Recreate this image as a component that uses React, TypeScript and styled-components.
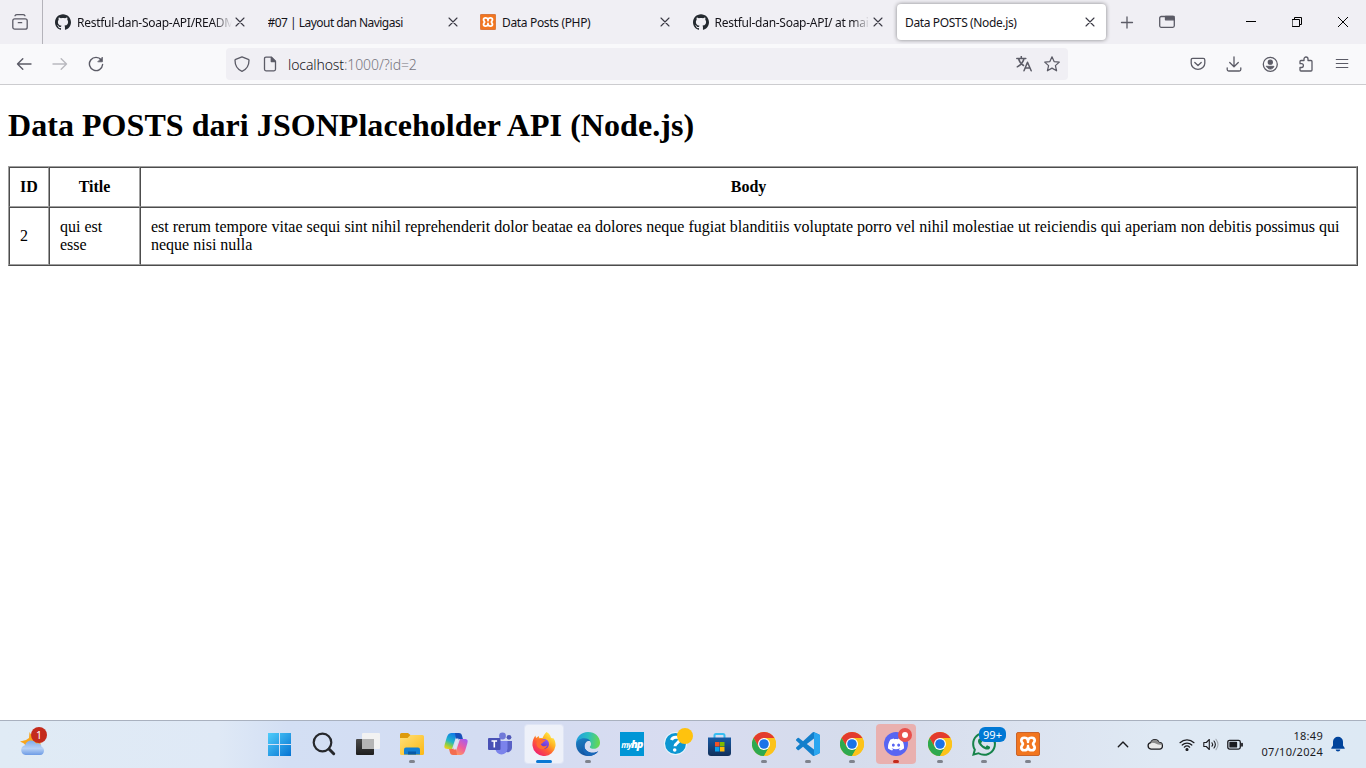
import React from "react";
import styled, { createGlobalStyle } from "styled-components";
import { SiGithub, SiDiscord, SiWhatsapp } from "react-icons/si";

const GlobalStyle = createGlobalStyle`
  * { box-sizing: border-box; }
  html, body { margin: 0; padding: 0; overflow: hidden; }
  svg { display: block; flex: none; }
`;

const uiFont = `"Noto Sans", "Open Sans", sans-serif`;

const Screen = styled.div`
  width: 1366px;
  height: 768px;
  display: flex;
  flex-direction: column;
  background: #fff;
  overflow: hidden;
  font-family: ${uiFont};
`;

/* ---------- tab strip ---------- */

const TabStrip = styled.header`
  height: 44px;
  flex: none;
  display: flex;
  align-items: center;
  background: #f0eff4;
`;

const RecentButton = styled.div`
  width: 43px;
  height: 44px;
  display: flex;
  align-items: center;
  padding-left: 12px;
  border-right: 1px solid #b4b3ba;
  color: #5b5b66;
`;

const TabList = styled.div`
  display: flex;
  gap: 3.5px;
  padding-left: 4px;
`;

const Tab = styled.div<{ $active?: boolean }>`
  width: 209px;
  height: 36px;
  display: flex;
  align-items: center;
  padding: 0 8px;
  border-radius: 4px;
  background: ${(p) => (p.$active ? "#fff" : "transparent")};
  box-shadow: ${(p) => (p.$active ? "0 0 4px rgba(0, 0, 0, 0.45)" : "none")};
`;

const Favicon = styled.span`
  width: 16px;
  height: 16px;
  margin-right: 6px;
  flex: none;
  color: #24292f;
`;

const TabLabel = styled.span<{ $fade?: boolean; $tracking?: number }>`
  flex: 1;
  min-width: 0;
  overflow: hidden;
  white-space: nowrap;
  padding-top: 2px;
  font-size: 12px;
  line-height: 18px;
  letter-spacing: ${(p) => p.$tracking ?? -0.35}px;
  color: #15141a;
  ${(p) => p.$fade && "mask-image: linear-gradient(to left, transparent 0, #000 18px);"}
`;

const CloseSlot = styled.span`
  width: 16px;
  height: 16px;
  flex: none;
  color: #3a3944;
`;

const StripButtons = styled.div`
  flex: 1;
  display: flex;
  align-items: center;
  justify-content: space-between;
  padding-left: 13px;
  color: #5b5b66;
`;

const NewTabGroup = styled.div`
  display: flex;
  align-items: center;
  gap: 24px;
`;

const WindowControls = styled.div`
  display: flex;
`;

const WindowControl = styled.div`
  width: 46px;
  height: 44px;
  display: flex;
  align-items: center;
  justify-content: center;
  color: #000;
`;

/* ---------- navigation bar ---------- */

const NavBar = styled.nav`
  height: 41px;
  flex: none;
  display: flex;
  align-items: center;
  background: #f9f9fb;
  border-bottom: 1px solid #cccccf;
  color: #5b5b66;
`;

const NavButtons = styled.div`
  width: 226px;
  display: flex;
  gap: 20px;
  padding-left: 16px;
`;

const Dimmed = styled.span`
  opacity: 0.4;
`;

const AddressBar = styled.div`
  width: 842px;
  height: 32px;
  display: flex;
  align-items: center;
  padding: 0 8px;
  border-radius: 4px;
  background: #f0eff4;
`;

const PageInfo = styled.div`
  display: flex;
  gap: 12px;
`;

const Address = styled.div`
  flex: 1;
  padding: 2px 0 0 10px;
  font-size: 14px;
  line-height: 20px;
  font-weight: 300;
  letter-spacing: -0.1px;
  color: #77767e;
`;

const Host = styled.span`
  color: #15141a;
`;

const AddressActions = styled.div`
  display: flex;
  gap: 12px;
`;

const ToolbarActions = styled.div`
  flex: 1;
  display: flex;
  justify-content: flex-end;
  gap: 20px;
  padding-right: 16px;
`;

/* ---------- document ---------- */

const Page = styled.main`
  flex: 1;
  padding: 22px 8px 0;
  font-family: "Liberation Serif", "Times New Roman", serif;
  color: #000;
`;

const Heading = styled.h1`
  margin: 0 0 22px;
  font-size: 32px;
  line-height: 37px;
  font-weight: bold;
  letter-spacing: 0.05px;
`;

const PostTable = styled.table`
  width: 1350px;
  table-layout: fixed;
  border-spacing: 0;
  border-style: solid;
  border-width: 1px;
  border-color: #a0a0a0 #4c4c4c #4c4c4c #a0a0a0;
  font-size: 16px;
  line-height: 18px;
  letter-spacing: 0.004px;

  th,
  td {
    padding: 10px;
    border-style: solid;
    border-width: 1px;
    border-color: #4c4c4c #a0a0a0 #a0a0a0 #4c4c4c;
  }
`;

const Column = styled.col<{ $w?: number }>`
  width: ${(p) => (p.$w ? `${p.$w}px` : "auto")};
`;

/* ---------- taskbar ---------- */

const Taskbar = styled.footer`
  height: 48px;
  flex: none;
  display: flex;
  border-top: 1px solid #a9b1bf;
  background: linear-gradient(
    90deg,
    #e0ebf5 0,
    #dfe9f6 16%,
    #d3dff4 21%,
    #d3dcf2 35%,
    #d8dcf0 50%,
    #d5dcec 62%,
    #dce3f0 75%,
    #dfe9f4 85%,
    #dde9f4 100%
  );
`;

const Weather = styled.div`
  position: relative;
  width: 258px;
  padding: 11px 0 0 20px;
`;

const CountBadge = styled.span`
  position: absolute;
  left: 31px;
  top: 6px;
  width: 16px;
  height: 16px;
  border-radius: 8px;
  background: #c42b1c;
  color: #fff;
  font-size: 10.5px;
  line-height: 16px;
  text-align: center;
`;

const Slot = styled.div`
  width: 44px;
  padding: 3px 2px 0;
`;

const AppTile = styled.div<{ $tone?: "active" | "alert" }>`
  position: relative;
  width: 40px;
  height: 40px;
  display: flex;
  align-items: center;
  justify-content: center;
  border-radius: 4px;
  background: ${(p) =>
    p.$tone === "active" ? "rgba(255,255,255,.6)" : p.$tone === "alert" ? "#e9b0af" : "transparent"};
  background-clip: padding-box;
  border: ${(p) => (p.$tone === "active" ? "1px solid rgba(255,255,255,.25)" : "none")};
`;

const RunMark = styled.span<{ $kind: "dot" | "active" | "alert" }>`
  position: absolute;
  bottom: ${(p) => (p.$kind === "active" ? 0 : 1)}px;
  left: ${(p) => (p.$kind === "active" ? 11 : 17)}px;
  width: ${(p) => (p.$kind === "active" ? 16 : 6)}px;
  height: 3px;
  border-radius: 2px;
  background: ${(p) => ({ dot: "#7f838d", active: "#0a78d4", alert: "#c42b1c" })[p.$kind]};
`;

const UnreadBadge = styled.span`
  position: absolute;
  left: 15px;
  top: 3px;
  width: 27px;
  height: 15px;
  border-radius: 6px;
  background: #0078d4;
  color: #fff;
  font-size: 11px;
  line-height: 16px;
  text-align: center;
`;

const MyHpLogo = styled.span`
  width: 24px;
  height: 24px;
  background: #0096d6;
  color: #fff;
  display: flex;
  align-items: baseline;
  justify-content: center;
  font: italic bold 8px/24px "Open Sans", sans-serif;
  letter-spacing: -0.9px;

  b {
    font-size: 11px;
    letter-spacing: -0.9px;
  }
`;

const Brand = styled.span<{ $color: string }>`
  color: ${(p) => p.$color};
`;

const Tray = styled.div`
  flex: 1;
  display: flex;
  align-items: center;
  justify-content: flex-end;
  color: #1b1b1f;
`;

const TrayItem = styled.span<{ $w: number }>`
  width: ${(p) => p.$w}px;
  display: flex;
  justify-content: center;
`;

const Clock = styled.div`
  width: 72px;
  padding-bottom: 2px;
  text-align: right;
  font-size: 11px;
  line-height: 16px;
  letter-spacing: 0.3px;
  white-space: nowrap;
`;

const BellSlot = styled.span`
  padding: 0 21px 0 8px;
`;

/* ---------- icons ---------- */

const Line = ({ size = 16, w = 1.3, children }: { size?: number; w?: number; children: React.ReactNode }) => (
  <svg width={size} height={size} viewBox={`0 0 ${size} ${size}`} fill="none" stroke="currentColor" strokeWidth={w} strokeLinecap="round" strokeLinejoin="round">
    {children}
  </svg>
);

const CloseIcon = () => <Line w={1.1}><path d="M4 4l8 8M12 4l-8 8" /></Line>;
const RecentIcon = () => (
  <Line><rect x="0.8" y="4.8" width="14.4" height="10.4" rx="2" /><path d="M3 1.8C3.5.9 4 .7 5 .7h6c1 0 1.5.2 2 1.1M6.3 8.7h3.4" /></Line>
);
const Xampp = ({ size }: { size: number }) => (
  <svg width={size} height={size} viewBox="0 0 24 24">
    <rect x=".5" y=".5" width="23" height="23" rx="1.500" fill="#f2761f" stroke="#c9642b" />
    <path d="M12 8.200C11 5 5.300 4.800 5.300 8.600c0 1.900 1.600 2.200 1.600 3.400s-1.600 1.500-1.600 3.400c0 3.800 5.700 3.600 6.700.4 1 3.200 6.700 3.400 6.700-.4 0-1.900-1.600-2.200-1.600-3.400s1.600-1.500 1.600-3.400C18.700 4.800 13 5 12 8.200z" fill="none" stroke="#fff" strokeWidth="2.700" strokeLinejoin="round" />
    <path d="M12 8v2M12 14v2" stroke="#fff" strokeWidth="2.500" strokeLinecap="round" />
  </svg>
);

const Chrome = () => (
  <svg width="24" height="24" viewBox="0 0 24 24">
    <circle cx="12" cy="12" r="12" fill="#fbc116" />
    <path d="M1.6 6A12 12 0 0 1 22.4 6H12L6.8 15z" fill="#e33b2e" />
    <path d="M1.6 6A12 12 0 0 0 12 24l5.2-9-5.2-3-5.2 3z" fill="#2da94f" />
    <path d="M12 6h10.4A12 12 0 0 1 12 24l5.2-9z" fill="#fcc31a" />
    <circle cx="12" cy="12" r="6" fill="#fff" />
    <circle cx="12" cy="12" r="4.8" fill="#1a73e8" />
  </svg>
);

const Start = () => (
  <svg width="24" height="24" viewBox="0 0 24 24">
    <defs><linearGradient id="win" x1="0" y1="0" x2="1" y2="1"><stop stopColor="#4fcdfb" /><stop offset="1" stopColor="#0673d2" /></linearGradient></defs>
    <path fill="url(#win)" d="M0 1h11v11H0zM12 1h11v11H12zM0 13h11v11H0zM12 13h11v11H12z" />
  </svg>
);

const Search = () => (
  <svg width="24" height="24" viewBox="0 0 24 24" fill="none" stroke="#26282c">
    <circle cx="10.5" cy="10.5" r="8.8" strokeWidth="2.2" /><path d="M17 17l4.700 4.700" strokeWidth="3" strokeLinecap="round" />
  </svg>
);

const TaskView = () => (
  <svg width="24" height="24" viewBox="0 0 24 24">
    <defs><linearGradient id="tv" x2="0" y2="1"><stop stopColor="#4b4b4b" /><stop offset="1" stopColor="#1e1e1e" /></linearGradient></defs>
    <rect y="7" width="18" height="16" rx="1" fill="url(#tv)" />
    <rect x="6" y="1" width="18" height="16" rx="1" fill="#f2f2f2" /><path d="M6 7h12v10H6z" fill="#b5b5b5" />
  </svg>
);

const Explorer = () => (
  <svg width="24" height="24" viewBox="0 0 24 24">
    <defs><linearGradient id="fo" x2="1" y2="1"><stop stopColor="#ffe07a" /><stop offset="1" stopColor="#fcb813" /></linearGradient></defs>
    <path d="M0 2.5Q0 1 1.5 1H8l3 2.5L8 7H0z" fill="#dd9a0b" />
    <path d="M0 6h7.5l3-3H22.500Q24 3 24 4.500V21.5Q24 23 22.500 23H1.500Q0 23 0 21.500z" fill="url(#fo)" />
    <path d="M4 22.500V17.500Q4 15.500 6 15.500H18Q20 15.500 20 17.500V22.500z" fill="#127fd3" /><path d="M8 22.500v-3h8v3z" fill="#075aa7" />
  </svg>
);

const Copilot = () => (
  <svg width="24" height="24" viewBox="0 0 24 24">
    <defs>
      <linearGradient id="ca" x1="0.600" y1="0" x2="0.200" y2="1"><stop stopColor="#117be7" /><stop offset=".5" stopColor="#20b5c9" /><stop offset=".75" stopColor="#8cce45" /><stop offset="1" stopColor="#f7cf16" /></linearGradient>
      <linearGradient id="cb" x1="0.800" y1="0" x2="0.200" y2="1"><stop stopColor="#a55cf0" /><stop offset=".5" stopColor="#ef5d9c" /><stop offset="1" stopColor="#ff9b59" /></linearGradient>
    </defs>
    <path d="M14 1H7.500C3.500 1 3 5 1.300 10.500S0 17 4 17h4l4-12z" fill="url(#ca)" />
    <path d="M11 1h4c3 0 3 3 4 6h-3c-2 0-3 1-3.600 3L12 7z" fill="#1850ba" />
    <path d="M10 23h6.500c4 0 4.500-4 6.200-9.500S24 7 20 7h-4l-4 12z" fill="url(#cb)" />
    <path d="M13 23H9c-3 0-3-3-4-6h3c2 0 3-1 3.600-3L12 17z" fill="#f36d4f" />
    <path d="M12.200 6.500h2.300l-2.800 11H9.500z" fill="#dce3f5" />
  </svg>
);

const Teams = () => (
  <svg width="24" height="24" viewBox="0 0 24 24">
    <circle cx="14.500" cy="4" r="3.400" fill="#7079d8" /><circle cx="21" cy="5.300" r="2.400" fill="#5058b8" />
    <path d="M16 9h8v7a4.500 4.500 0 0 1-7 3.500z" fill="#5961c6" /><path d="M8 9h11.500v7.500a6 6 0 0 1-12 0z" fill="#7b83eb" />
    <rect y="6" width="12.500" height="12" rx="1" fill="#4951b5" /><path d="M3.500 9h5.600M6.300 9v6.500" stroke="#fff" strokeWidth="1.600" />
  </svg>
);

const Firefox = () => (
  <svg width="24" height="24" viewBox="0 0 24 24">
    <defs>
      <linearGradient id="fx" x1=".85" y1=".1" x2=".2" y2=".9"><stop stopColor="#fff04a" /><stop offset=".35" stopColor="#ffaf22" /><stop offset=".65" stopColor="#ff5a36" /><stop offset="1" stopColor="#f0246e" /></linearGradient>
      <linearGradient id="fp" x1=".8" y1="0" x2=".3" y2="1"><stop stopColor="#9059ff" /><stop offset="1" stopColor="#5a31bc" /></linearGradient>
    </defs>
    <path d="M14.500 0c3 1.700 4 3.700 4.300 5.400 1.500.8 2.200 1.300 2.400.7 1.800 2.100 2.600 5 2.300 8A11.600 11.600 0 0 1 .5 13.800C.2 9.900 1.200 6.600 3.500 3.500c0 1 .2 1.800.6 2.500L6.800 4c0 1 .3 1.800.8 2.300 1-.3 2-.4 3-.2 1.300-3 2.200-4.500 3.900-6.100z" fill="url(#fx)" />
    <circle cx="12" cy="12" r="5" fill="url(#fp)" />
    <path d="M6.800 7c1.900-.7 3.300-.3 4.300.8h2.700c-.3 1.600-2.700 2-2.900 2.700-.2 1.200-1.500 1.200-2.200 1.500 1.200 2.700 4 3 6.600 1.300-1.200 4-5.800 5.300-9.100 2.100C3.600 12.800 4.200 9.500 6.800 7z" fill="#ff6d30" />
    <path d="M13.300 6.400c3 .8 4.600 3.400 4.200 6.400 1.400-2.200 1.200-5-.2-7.200z" fill="#ffc52e" />
  </svg>
);

const Edge = () => (
  <svg width="24" height="24" viewBox="0 0 24 24">
    <defs>
      <linearGradient id="ea" x1="0" y1=".3" x2="1" y2=".4"><stop stopColor="#219be0" /><stop offset=".5" stopColor="#2bbfc0" /><stop offset="1" stopColor="#69d94d" /></linearGradient>
      <linearGradient id="eb" x1="0" y1="0" x2=".5" y2="1"><stop stopColor="#1b82c4" /><stop offset="1" stopColor="#124f9e" /></linearGradient>
    </defs>
    <path d="M12 0c7 0 12 4.700 12 10.500 0 4-3 6.300-6.200 6.300-2.500 0-4-.8-4-1.800 0-.8 1.200-1 1.200-3 0-2.700-2.600-4.800-6.200-4.800C4.500 7.200.7 9.500 0 12 0 5 5 0 12 0z" fill="url(#ea)" />
    <path d="M0 12c.2-3.600 4-5.800 8.300-5.800 3 0 5 1.300 6.200 3-3-1-6 1.200-6 5 0 4 4.200 6.500 8 6.500 2.500 0 4.500-.7 5.800-1.500C20 22.300 16.400 24 12 24 5 24 0 18.700 0 12z" fill="url(#eb)" />
    <path d="M8.500 14.200c0 4 4.200 6.500 8 6.500 2.500 0 4.500-.7 5.800-1.500C20 22.300 16.400 24 12 24 5.500 21 5.500 12.500 10.500 9.700 9.200 10.800 8.500 12.400 8.500 14.200z" fill="#1767b9" />
  </svg>
);

const Help = () => (
  <svg width="30" height="28" viewBox="0 0 30 28">
    <circle cx="12.500" cy="15.500" r="11.500" fill="#e9f4fb" /><circle cx="12.500" cy="15.500" r="10.500" fill="#0d96d2" />
    <path d="M8.500 12c1-3.500 8-4 8-.2 0 3-4.500 3.200-4.500 6.400" fill="none" stroke="#fff" strokeWidth="3" /><circle cx="11.700" cy="22" r="1.800" fill="#fff" />
    <circle cx="22" cy="8" r="8" fill="#ffc20e" />
  </svg>
);

const HelpSlot = styled.span`
  margin: -5px -4px 0 0;
`;

const Store = () => (
  <svg width="24" height="24" viewBox="0 0 24 24">
    <defs><linearGradient id="st" x2="0" y2="1"><stop stopColor="#175aa5" /><stop offset="1" stopColor="#122f59" /></linearGradient></defs>
    <path d="M6.500 6V3.500Q6.500 2 8 2h7Q16.500 2 16.500 3.500V6" fill="none" stroke="#36bdf1" strokeWidth="2" />
    <path d="M0 5.500h23V21q0 3-3 3H3q-3 0-3-3z" fill="url(#st)" />
    <path d="M7 10h4.500v4.500H7z" fill="#f35325" /><path d="M12 10h4.500v4.500H12z" fill="#7fba00" /><path d="M7 15h4.500v4.500H7z" fill="#08a1ee" /><path d="M12 15h4.500v4.500H12z" fill="#ffba08" />
  </svg>
);

const VSCode = () => (
  <svg width="24" height="24" viewBox="0 0 24 24">
    <path fill="#137fcb" d="M23.150 2.587L18.210.210a1.494 1.494 0 0 0-1.705.290l-9.460 8.630-4.120-3.128a.999.999 0 0 0-1.276.057L.327 7.261A1 1 0 0 0 .326 8.740L3.899 12 .326 15.260a1 1 0 0 0 .001 1.479L1.650 17.940a.999.999 0 0 0 1.276.057l4.120-3.128 9.460 8.630a1.492 1.492 0 0 0 1.704.290l4.942-2.377A1.500 1.500 0 0 0 24 20.060V3.939a1.500 1.500 0 0 0-.850-1.352zm-5.146 14.861L10.826 12l7.178-5.448v10.896z" />
    <path fill="#2aa6f0" d="M18 .3l5.150 2.287A1.500 1.500 0 0 1 24 3.939V20.060a1.500 1.500 0 0 1-.850 1.350L18 23.800z" />
  </svg>
);

const Discord = () => (
  <svg width="40" height="40" viewBox="0 0 40 40">
    <circle cx="20" cy="20" r="12" fill="#5865f2" />
    <svg x="12" y="12.500" width="16" height="16" viewBox="0 0 24 24" color="#fff"><SiDiscord size={24} /></svg>
    <circle cx="29" cy="11" r="7" fill="#e8504c" /><circle cx="29" cy="11" r="3" fill="#fff" />
  </svg>
);

const Partly = () => (
  <svg width="25" height="25" viewBox="0 0 25 25">
    <defs><linearGradient id="cl" x2="0" y2="1"><stop stopColor="#7eaaea" /><stop offset=".55" stopColor="#b6d0f5" /><stop offset="1" stopColor="#6d9be5" /></linearGradient></defs>
    <path d="M9.500 0l3 5 8 1v8H6l-2-2.500L0 9.500l6-1.500 3-2z" fill="#f8a51b" />
    <path d="M5.500 23a5 5 0 0 1-.5-9.800C6.500 7.500 14 7 16 11.500c3-1.200 5.500 1 5.500 3.300 4 1.500 3 8.200-1.500 8.200z" fill="url(#cl)" />
  </svg>
);

type App = { name: string; icon: React.ReactNode; mark?: "dot" | "active" | "alert"; badge?: string };

const apps: App[] = [
  { name: "start", icon: <Start /> },
  { name: "search", icon: <Search /> },
  { name: "taskview", icon: <TaskView /> },
  { name: "explorer", icon: <Explorer />, mark: "dot" },
  { name: "copilot", icon: <Copilot /> },
  { name: "teams", icon: <Teams /> },
  { name: "firefox", icon: <Firefox />, mark: "active" },
  { name: "edge", icon: <Edge />, mark: "dot" },
  { name: "myhp", icon: <MyHpLogo>my<b>hp</b></MyHpLogo> },
  { name: "help", icon: <HelpSlot><Help /></HelpSlot> },
  { name: "store", icon: <Store /> },
  { name: "chrome-1", icon: <Chrome />, mark: "dot" },
  { name: "code", icon: <VSCode />, mark: "dot" },
  { name: "chrome-2", icon: <Chrome />, mark: "dot" },
  { name: "discord", icon: <Discord />, mark: "alert" },
  { name: "chrome-3", icon: <Chrome />, mark: "dot" },
  { name: "whatsapp", icon: <Brand $color="#16834a"><SiWhatsapp size={24} /></Brand>, mark: "dot", badge: "99+" },
  { name: "xampp", icon: <Xampp size={24} />, mark: "dot" },
];

const tabs = [
  { title: "Restful-dan-Soap-API/READM", icon: <SiGithub size={16} />, fade: true, tracking: -0.27 },
  { title: "#07 | Layout dan Navigasi", tracking: -0.52 },
  { title: "Data Posts (PHP)", icon: <Xampp size={16} />, tracking: -0.34 },
  { title: "Restful-dan-Soap-API/ at mai", icon: <SiGithub size={16} />, fade: true, tracking: -0.28 },
  { title: "Data POSTS (Node.js)", active: true, tracking: -0.38 },
];

export default function App() {
  return (
    <Screen>
      <GlobalStyle />
      <TabStrip>
        <RecentButton><RecentIcon /></RecentButton>
        <TabList>
          {tabs.map((t) => (
            <Tab key={t.title} $active={t.active}>
              {t.icon && <Favicon>{t.icon}</Favicon>}
              <TabLabel $fade={t.fade} $tracking={t.tracking}>{t.title}</TabLabel>
              <CloseSlot><CloseIcon /></CloseSlot>
            </Tab>
          ))}
        </TabList>
        <StripButtons>
          <NewTabGroup>
            <Line><path d="M8 3v11M2.500 8.500h11" /></Line>
            <Line><rect x="0.700" y="2.500" width="14.600" height="10.800" rx="1.500" /><path d="M6.500 2.500v3.300h8.500v-3.300z" fill="currentColor" /></Line>
          </NewTabGroup>
          <WindowControls>
            <WindowControl><Line size={10} w={1}><path d="M0 4.500h10" /></Line></WindowControl>
            <WindowControl><Line size={10} w={1}><path d="M.5 2.500h7v7h-7zM2.500 2.500v-2h7v7h-2" /></Line></WindowControl>
            <WindowControl><Line size={10} w={1}><path d="M0 0l10 10M10 0L0 10" /></Line></WindowControl>
          </WindowControls>
        </StripButtons>
      </TabStrip>

      <NavBar>
        <NavButtons>
          <Line w={1.400}><path d="M15 8H1.500M6.800 2.700L1.500 8l5.300 5.300" /></Line>
          <Dimmed><Line w={1.400}><path d="M1 8h13.500M9.200 2.700L14.500 8l-5.300 5.300" /></Line></Dimmed>
          <Line w={1.400}><path d="M13.300 4A6.600 6.600 0 1 0 14.600 8.500" /><path d="M14.400 1.500v4.300h-4.300z" fill="currentColor" strokeWidth=".8" /></Line>
        </NavButtons>
        <AddressBar>
          <PageInfo>
            <Line><path d="M8 .8l6.300 2.500c.5.200.7.500.7 1C15 10 12.500 13.500 8 15.300 3.500 13.500 1 10 1 4.300c0-.5.200-.8.700-1z" /></Line>
            <Line><path d="M9.500 1.200H4C3 1.200 2.500 1.700 2.500 2.700v10.600c0 1 .5 1.500 1.500 1.500h8c1 0 1.500-.5 1.500-1.500V5.200z" /><path d="M9.300 1.500v4h4z" fill="currentColor" /></Line>
          </PageInfo>
          <Address><Host>localhost</Host>:1000/?id=2</Address>
          <AddressActions>
            <Line w={1.500}><path d="M.8 2.500h9M5.300.3v2.200M8 2.500C7.300 6.500 4.500 9 1.300 10.800M2.500 2.500C3.500 6.500 5.500 8.300 7.500 9.500M8 14.800l3.500-8.600 3.700 8.600M9.200 12h4.700" /></Line>
            <Line w={1.250}><path d="M8 .8l2.100 4.800 5.200.5-3.900 3.500 1.200 5.200L8 12.100l-4.600 2.700 1.200-5.200L.7 6.100l5.200-.5z" /></Line>
          </AddressActions>
        </AddressBar>
        <ToolbarActions>
          <Line><path d="M2.700 2.400h10.600c1 0 1.500.5 1.500 1.500v3.300a6.800 6.200 0 0 1-13.600 0V3.900c0-1 .5-1.500 1.500-1.500zM4.800 6.500L8 9.500l3.200-3" /></Line>
          <Line><path d="M8 .8v9.800M3.700 6.500L8 10.700l4.300-4.200M1.200 11.800v1.700c0 1 .5 1.500 1.500 1.500h10.600c1 0 1.500-.5 1.500-1.500v-1.700" /></Line>
          <Line><circle cx="8.300" cy="8.300" r="7" /><circle cx="8.300" cy="6.200" r="2" fill="currentColor" /><path d="M4.600 10.300h7.400c-.6 1.800-2 2.800-3.700 2.800s-3.100-1-3.700-2.800z" fill="currentColor" strokeWidth=".8" /></Line>
          <Line><path d="M2 7V5.500c0-.7.400-1 1-1h3V3a2 2 0 0 1 4 0v1.500h3c.7 0 1 .4 1 1V14c0 .7-.3 1-1 1H3c-.7 0-1-.3-1-1v-2.500h1.500a1.800 1.800 0 0 0 0-3.800H2" /></Line>
          <Line w={1.200}><path d="M2.300 3.500h11.500M2.300 7.500h11.500M2.300 11.500h11.500" /></Line>
        </ToolbarActions>
      </NavBar>

      <Page>
        <Heading>Data POSTS dari JSONPlaceholder API (Node.js)</Heading>
        <PostTable>
          <colgroup><Column $w={40} /><Column $w={91} /><Column /></colgroup>
          <thead><tr><th>ID</th><th>Title</th><th>Body</th></tr></thead>
          <tbody>
            <tr>
              <td>2</td>
              <td>qui est esse</td>
              <td>est rerum tempore vitae sequi sint nihil reprehenderit dolor beatae ea dolores neque fugiat blanditiis voluptate porro vel nihil molestiae ut reiciendis qui aperiam non debitis possimus qui neque nisi nulla</td>
            </tr>
          </tbody>
        </PostTable>
      </Page>

      <Taskbar>
        <Weather><Partly /><CountBadge>1</CountBadge></Weather>
        {apps.map((a) => (
          <Slot key={a.name}>
            <AppTile $tone={a.mark === "active" || a.mark === "alert" ? a.mark : undefined}>
              {a.icon}
              {a.mark && <RunMark $kind={a.mark} />}
              {a.badge && <UnreadBadge>{a.badge}</UnreadBadge>}
            </AppTile>
          </Slot>
        ))}
        <Tray>
          <TrayItem $w={32}><Line w={1.400}><path d="M3.300 9.800L8 5.100l4.700 4.700" /></Line></TrayItem>
          <TrayItem $w={32}>
            <Line><path d="M4 12.200a3.300 3.300 0 0 1-.3-6.500C5 2 10.200 1.500 12 5.500c4.500 0 4.500 6.700.5 6.700z" fill="#e9e9e9" /><path d="M3.700 5.700C5 2 10.200 1.500 12 5.500c2 0 3 1 3.300 2.500L11 7.500 7.500 6z" fill="#8b8b8b" stroke="none" /></Line>
          </TrayItem>
          <TrayItem $w={32}><Line w={1.200}><path d="M1 5.700a10 10 0 0 1 14 0M3.200 8a6.900 6.900 0 0 1 9.600 0M5.300 10.200a3.900 3.900 0 0 1 5.400 0" /><circle cx="8" cy="12.500" r="1" fill="currentColor" /></Line></TrayItem>
          <TrayItem $w={16}><Line w={1.100}><path d="M.8 5.500h2.500l3-3v10l-3-3H.8zM9 5.800q1.300 1.700 0 3.400M11 4q2.700 3.500 0 7" /><path d="M13 2.300q4 5.200 0 10.400" opacity=".3" /></Line></TrayItem>
          <TrayItem $w={32}><Line w={1.300}><rect x=".8" y="3.300" width="12.500" height="8.800" rx="1.800" /><path d="M3 5.500h6.500v4.400H3z" fill="currentColor" /><path d="M15 6.600v2.200" strokeWidth="1.800" /></Line></TrayItem>
          <Clock>18:49<br />07/10/2024</Clock>
          <BellSlot>
            <svg width="14" height="17" viewBox="0 0 14 17" fill="#00439b"><path d="M7 .8a5 5 0 0 1 5 5v3.700l1.700 2.400v.8H.3v-.8L2 9.500V5.800a5 5 0 0 1 5-5zM4.700 13.500h4.600c0 2.600-4.600 2.600-4.600 0z" /></svg>
          </BellSlot>
        </Tray>
      </Taskbar>
    </Screen>
  );
}
